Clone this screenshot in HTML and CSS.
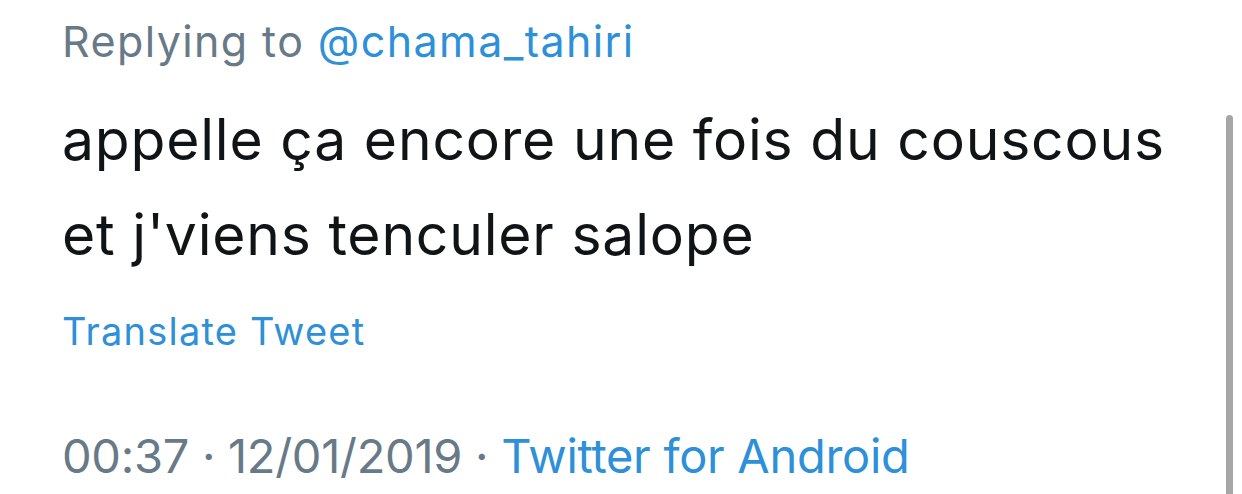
FILE: index.html
```html
<!DOCTYPE html>
<html>
<head>
    <title>Tweet</title>
    <link rel="stylesheet" href="styles.css">
</head>
<body>
    <div class="tweet">
        <div class="reply">Replying to <span class="link">@chama_tahiri</span></div>
        <div class="text">appelle ça encore une fois du couscous<br>et j'viens tenculer salope</div>
        <div class="translate">Translate Tweet</div>
        <div class="meta">00:37 · 12/01/2019 · <span class="link">Twitter for Android</span></div>
    </div>
    <div class="scrollbar"></div>
</body>
</html>
```

FILE: styles.css
```css
body {
    margin: 0;
    background: #ffffff;
    font-family: Inter, "Noto Sans", sans-serif;
    overflow: hidden;
}

.tweet {
    padding: 11px 0 0 62px;
}

.reply {
    font-size: 43px;
    line-height: 60px;
    letter-spacing: 1.4px;
    color: #687987;
}

.link {
    color: #2d90d8;
}

.text {
    margin-top: 21px;
    font-size: 57px;
    line-height: 95px;
    letter-spacing: 0.8px;
    color: #111417;
}

.translate {
    margin-top: 24px;
    font-size: 38px;
    line-height: 50px;
    letter-spacing: 1.2px;
    color: #2d90d8;
}

.meta {
    margin-top: 70px;
    font-size: 47px;
    line-height: 60px;
    letter-spacing: -0.3px;
    color: #687987;
}

/* Scroll indicator */
.scrollbar {
    position: absolute;
    left: 1226px;
    top: 115px;
    width: 7px;
    height: 400px;
    background: #a6a6a6;
    border-radius: 4px;
}
```
